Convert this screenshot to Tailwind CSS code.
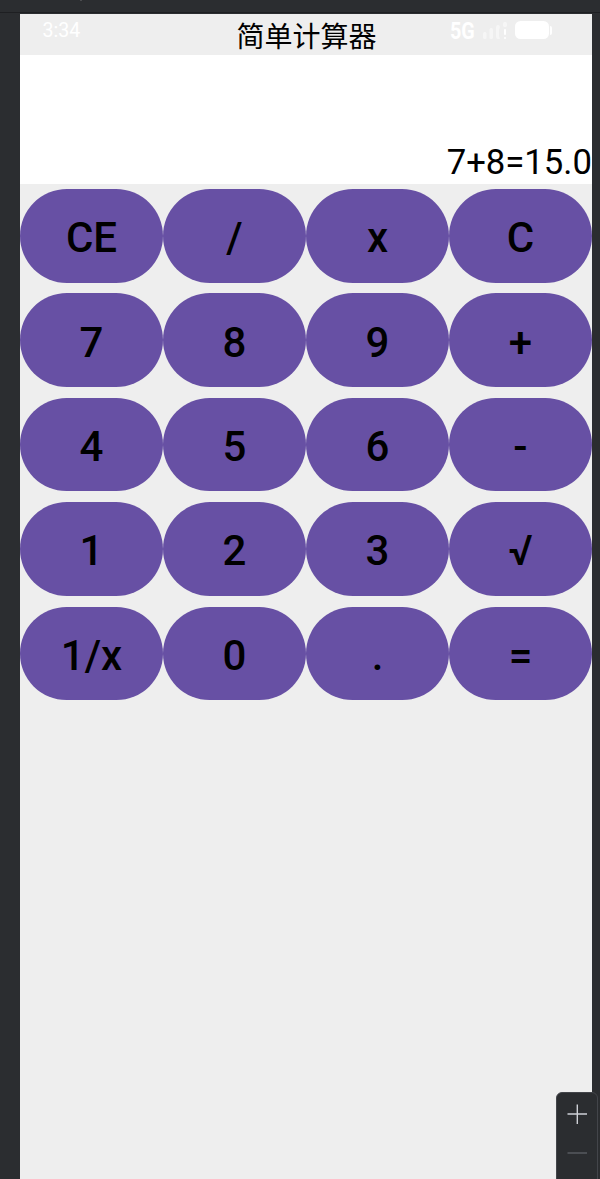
<!DOCTYPE html>
<html lang="zh">
<head>
<meta charset="utf-8">
<title>简单计算器</title>
<script src="https://cdn.jsdelivr.net/npm/@tailwindcss/browser@4"></script>
</head>
<body class="relative h-[1179px] w-[600px] overflow-hidden bg-[#2b2d30] font-['Roboto','Noto_Sans_CJK_SC',sans-serif] text-black">
<div class="flex h-full flex-col">
  <header class="flex h-[14px] shrink-0 flex-col justify-between">
    <span class="ml-20 h-px w-0.5 bg-[#4a4b4e]"></span>
    <span class="mb-px h-px bg-[#1e1f22]"></span>
  </header>
  <main class="ml-5 flex w-[572px] grow flex-col bg-[#eeeeee]">
    <div class="relative h-[41px] shrink-0">
      <h1 class="pt-[3px] pl-px text-center text-[28px] leading-[41px] font-normal whitespace-nowrap">简单计算器</h1>
      <span class="absolute top-[5px] left-[22.5px] text-[19.6px] leading-6 text-white">3:34</span>
      <span class="absolute top-[6px] left-[429.5px] text-[23px] leading-6 font-bold text-white"><span class="inline-block origin-left scale-x-[.86]">5G</span></span>
      <svg class="absolute top-[7px] left-[462px]" width="72" height="20" viewBox="0 0 72 20">
        <g fill="#f6f6f6">
          <rect x="1" y="11" width="3.5" height="7" rx="1.5"/>
          <rect x="7.5" y="7" width="3.5" height="11" rx="1.5"/>
          <path d="M14 6q0-2 2-2t2 2l-1 3v6l1 3h-2q-2 0-2-2z"/>
          <rect x="21" y="1" width="4" height="5" rx="1.5"/>
        </g>
        <g fill="#fff"><rect x="22" y="8" width="2" height="6" rx="1"/><rect x="22" y="16" width="2" height="2" rx="1"/>
          <rect x="33" y="0" width="34" height="18" rx="5.5"/><path d="M68 5q2 0 2 2v5q0 2-2 2z"/></g>
      </svg>
    </div>
    <div class="flex h-[128.5px] shrink-0 items-end justify-end bg-white pb-px text-[34.7px] leading-[41px]">7+8=15.0</div>
    <div class="mt-[5.5px] grid grid-cols-4 gap-y-[10.7px] text-[42px] leading-none font-medium *:flex *:h-[93.7px] *:items-center *:justify-center *:rounded-full *:bg-[#6750a4] *:pt-[5px]">
      <button>CE</button><button>/</button><button>x</button><button>C</button>
      <button>7</button><button>8</button><button>9</button><button>+</button>
      <button>4</button><button>5</button><button>6</button><button>-</button>
      <button>1</button><button>2</button><button>3</button><button>√</button>
      <button>1/x</button><button>0</button><button>.</button><button>=</button>
    </div>
  </main>
</div>
<div class="absolute top-[1092px] left-[556px] flex h-[100px] w-[42px] flex-col items-center rounded-md border border-[#43454a] bg-[#2b2d30]">
  <svg width="40" height="80" viewBox="0 0 40 80" fill="none">
    <path d="M10.5 21h19.5M20.3 11.5v19.5" stroke="#ced0d6" stroke-width="1.4"/>
    <path d="M10.5 60h19.5" stroke="#5a5d63" stroke-width="1.4"/>
  </svg>
</div>
</body>
</html>
